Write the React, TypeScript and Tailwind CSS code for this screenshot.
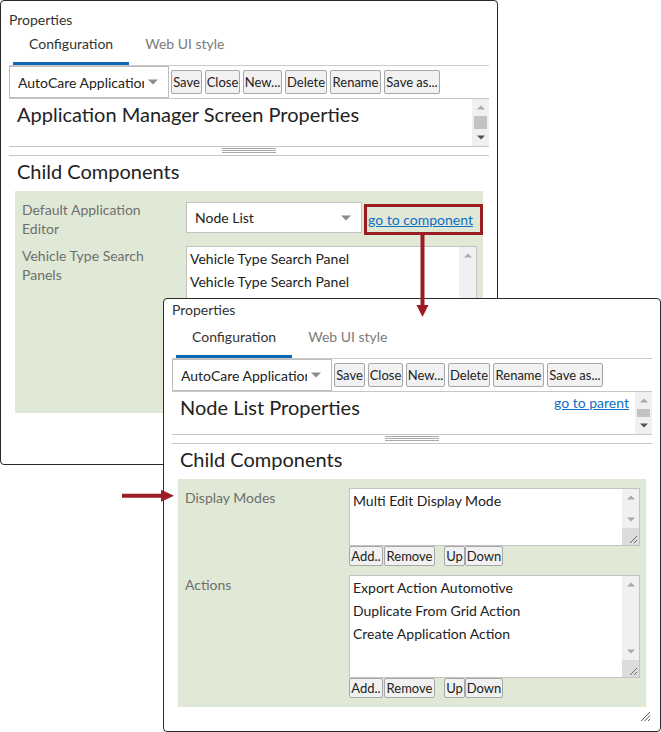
import React from "react";

const Caret = () => (
  <svg width="10" height="6" viewBox="0 0 10 6" className="shrink-0">
    <path d="M0 0.5h10L5 5.5z" fill="#8c8c8c" />
  </svg>
);

const Tri = ({ dir, color }: { dir: "up" | "down"; color: string }) => (
  <svg width="8" height="5" viewBox="0 0 8 5">
    <path d={dir === "up" ? "M0 4.5L4 0.5L8 4.5z" : "M0 0.5L8 0.5L4 4.5z"} fill={color} />
  </svg>
);

const Grip = () => (
  <svg width="17" height="17" viewBox="0 0 17 17">
    <path d="M15 8L8 15M15 12L12 15" stroke="#6a6a6a" strokeWidth="1" />
  </svg>
);

function Scrollbar({ thumb, grip, downDark }: { thumb?: boolean; grip?: boolean; downDark?: boolean }) {
  return (
    <div className="w-[17px] shrink-0 bg-[#f0f0f0] flex flex-col">
      <div className="h-[17px] flex items-center justify-center">
        <Tri dir="up" color="#a9a9a9" />
      </div>
      <div className="flex-1 px-[2px]">{thumb && <div className="h-full bg-[#c3c3c3]" />}</div>
      <div className="h-[17px] flex items-center justify-center">
        <Tri dir="down" color={downDark ? "#505050" : "#a9a9a9"} />
      </div>
      {grip && (
        <div className="h-[17px] bg-[#dcdcdc]">
          <Grip />
        </div>
      )}
    </div>
  );
}

const Btn = ({ children, className }: { children: React.ReactNode; className: string }) => (
  <button
    className={`h-full shrink-0 p-0 border border-[#a7a7a7] bg-[#f1f1f1] rounded-[2px] text-[13px] leading-none text-[#222] flex items-center justify-center whitespace-nowrap ${className}`}
  >
    {children}
  </button>
);

const Label = ({ children }: { children: React.ReactNode }) => (
  <div className="w-[171px] shrink-0 pl-[7px] pr-[24px] text-[14px] leading-[19px] text-[#6f6f6f]">{children}</div>
);

// list with its Add/Remove/Up/Down row (the row is off screen behind the front window for the back one)
function ListBox({ items, h, buttons = true }: { items: string[]; h: string; buttons?: boolean }) {
  return (
    <div>
      <div className={`w-[291px] ${h} border border-[#c3c3c3] bg-white flex`}>
        <div className="flex-1 pl-[3px]">
          {items.map((it, i) => (
            <div key={i} className="text-[14px] leading-[23px] text-[#222] whitespace-nowrap">
              {it}
            </div>
          ))}
        </div>
        <Scrollbar grip />
      </div>
      {buttons && (
        <div className="h-[20px] flex">
          <Btn className="w-[34px]">Add..</Btn>
          <Btn className="ml-[1px] w-[51px]">Remove</Btn>
          <Btn className="ml-[9px] w-[21px]">Up</Btn>
          <Btn className="w-[38px]">Down</Btn>
        </div>
      )}
    </div>
  );
}

type WinProps = {
  className: string;
  pt: string;
  tabH: string;
  titleH: string;
  title: string;
  parentLink?: boolean;
  panelClass: string;
  children: React.ReactNode;
};

function PropWindow({ className, pt, tabH, titleH, title, parentLink, panelClass, children }: WinProps) {
  return (
    <div className={`absolute bg-white border border-[#2a2a2a] rounded-[4px] flex flex-col ${className}`}>
      <div className={`${pt} pl-[8px] text-[14px] leading-[17px] text-[#333]`}>Properties</div>
      <div className={`mx-[8px] ${tabH} flex border-b border-[#c9c9c9]`}>
        <div className="ml-[4px] px-[16px] pb-[9px] flex items-end border-b-[3px] border-[#1068b4] text-[14px] leading-[19px] text-[#333]">
          Configuration
        </div>
        <div className="px-[16px] pb-[9px] flex items-end border-b-[3px] border-transparent text-[14px] leading-[19px] text-[#7b7b7b]">
          Web UI style
        </div>
      </div>
      <div className="mx-[8px] h-[32px] flex items-start">
        <div className="w-[160px] h-[32px] shrink-0 border border-[#bdbdbd] flex items-center pl-[8px]">
          <span className="w-[126px] overflow-hidden whitespace-nowrap text-[14px] leading-[19px] text-[#222]">
            AutoCare Application
          </span>
          <span className="ml-[4px]">
            <Caret />
          </span>
        </div>
        <div className="ml-[2px] mt-[4px] h-[24px] flex gap-[3px]">
          <Btn className="w-[31px]">Save</Btn>
          <Btn className="w-[35px]">Close</Btn>
          <Btn className="w-[39px]">New...</Btn>
          <Btn className="w-[42px]">Delete</Btn>
          <Btn className="w-[51px]">Rename</Btn>
          <Btn className="w-[56px]">Save as...</Btn>
        </div>
      </div>
      <div className={`mx-[8px] ${titleH} border-y border-[#c6c6c6] flex`}>
        <div className="flex-1 pl-[8px] pt-[2px] text-[20px] leading-[26px] text-[#222]">{title}</div>
        {parentLink && (
          <a className="mr-[6px] pt-[2px] text-[14px] leading-[17px] text-[#0f6fc6] underline">go to parent</a>
        )}
        <Scrollbar thumb downDark />
      </div>
      <div className="mx-[8px] h-[9px] border-b border-[#c6c6c6] flex justify-center">
        <div className="mt-[1px] w-[54px] h-[5px] flex flex-col justify-between">
          <div className="h-px bg-[#a9a9a9]" />
          <div className="h-px bg-[#a9a9a9]" />
          <div className="h-px bg-[#a9a9a9]" />
        </div>
      </div>
      <div className="ml-[16px] pt-[2px] text-[20px] leading-[26px] text-[#222]">Child Components</div>
      <div className={`ml-[14px] mt-[7px] w-[468px] bg-[#dfe9d6] ${panelClass}`}>{children}</div>
    </div>
  );
}

export default function App() {
  return (
    <div className="relative w-[661px] h-[732px] bg-white overflow-hidden font-['Lato','Segoe_UI',sans-serif]">
      <PropWindow
        className="left-0 top-0 w-[498px] h-[465px]"
        pt="pt-[10px]"
        tabH="h-[38px]"
        titleH="h-[49px]"
        title="Application Manager Screen Properties"
        panelClass="h-[222px] pt-[9px]"
      >
        <div className="flex items-start">
          <Label>Default Application Editor</Label>
          <div className="mt-[2px] w-[176px] h-[31px] border border-[#c3c3c3] bg-white flex items-center justify-between pl-[8px] pr-[10px]">
            <span className="text-[14px] leading-[19px] text-[#222]">Node List</span>
            <Caret />
          </div>
          <div className="ml-[2px] mt-[4px] w-[119px] h-[31px] border-[3px] border-[#9c1c24] flex items-center pl-[1px]">
            <a className="text-[14px] leading-[17px] text-[#0f6fc6] underline whitespace-nowrap">go to component</a>
          </div>
        </div>
        <div className="mt-[8px] flex items-start">
          <Label>Vehicle Type Search Panels</Label>
          <ListBox h="h-[124px]" buttons={false} items={["Vehicle Type Search Panel", "Vehicle Type Search Panel"]} />
        </div>
      </PropWindow>

      <PropWindow
        className="left-[163px] top-[298px] w-[498px] h-[434px]"
        pt="pt-[2px]"
        tabH="h-[41px]"
        titleH="h-[44px]"
        title="Node List Properties"
        parentLink
        panelClass="pt-[9px] pb-[9px]"
      >
        <div className="flex items-start">
          <Label>Display Modes</Label>
          <ListBox h="h-[58px]" items={["Multi Edit Display Mode"]} />
        </div>
        <div className="mt-[9px] flex items-start">
          <Label>Actions</Label>
          <ListBox
            h="h-[103px]"
            items={["Export Action Automotive", "Duplicate From Grid Action", "Create Application Action"]}
          />
        </div>
        <svg width="11" height="11" viewBox="0 0 11 11" className="absolute right-[9px] bottom-[9px]">
          <path d="M10 1L1 10M10 4.5L4.5 10M10 8L8 10" stroke="#555" strokeWidth="1" />
        </svg>
      </PropWindow>

      <svg className="absolute inset-0 pointer-events-none" width="661" height="732" viewBox="0 0 661 732">
        <line x1="422.5" y1="235" x2="422.5" y2="307" stroke="#9c1c24" strokeWidth="4" />
        <path d="M416.5 305L428.5 305L422.5 317z" fill="#9c1c24" />
        <line x1="122" y1="495.7" x2="163" y2="495.7" stroke="#9c1c24" strokeWidth="4" />
        <path d="M161 489.7L161 501.7L174 495.7z" fill="#9c1c24" />
      </svg>
    </div>
  );
}
